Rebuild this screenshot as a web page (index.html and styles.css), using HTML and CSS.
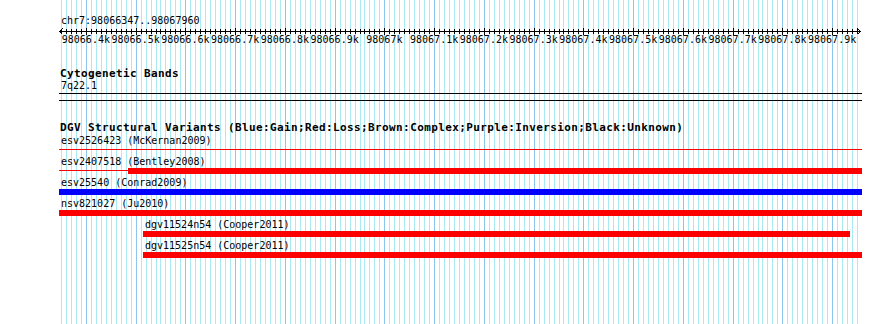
FILE: index.html
```html
<!DOCTYPE html>
<html lang="en">
<head>
    <meta charset="UTF-8">
    <title>chr7:98066347..98067960</title>
    <link rel="stylesheet" href="styles.css">
</head>
<body>
    <div class="browser">
        <!-- guide lines every 10bp, filled in by script.js -->
        <svg class="guides" id="guides" width="804" height="324"></svg>

        <div class="tracks">
            <div class="position">chr7:98066347..98067960</div>
            <svg class="ruler" id="ruler" width="804" height="9"></svg>
            <div class="scale-labels">
                <span>98066.4k</span><span>98066.5k</span><span>98066.6k</span><span>98066.7k</span>
                <span>98066.8k</span><span>98066.9k</span><span>98067k</span><span>98067.1k</span>
                <span>98067.2k</span><span>98067.3k</span><span>98067.4k</span><span>98067.5k</span>
                <span>98067.6k</span><span>98067.7k</span><span>98067.8k</span><span>98067.9k</span>
            </div>

            <div class="track cyto">
                <div class="track-title">Cytogenetic Bands</div>
                <div class="band-name">7q22.1</div>
                <div class="band"></div>
            </div>

            <div class="track dgv">
                <div class="track-title">DGV Structural Variants (Blue:Gain;Red:Loss;Brown:Complex;Purple:Inversion;Black:Unknown)</div>

                <div class="feature">
                    <div class="feature-label">esv2526423 (McKernan2009)</div>
                    <div class="feature-bar"><div class="thin loss"></div></div>
                </div>
                <div class="feature">
                    <div class="feature-label">esv2407518 (Bentley2008)</div>
                    <div class="feature-bar">
                        <div class="thin loss" style="width: 69px"></div>
                        <div class="thick loss"></div>
                    </div>
                </div>
                <div class="feature">
                    <div class="feature-label">esv25540 (Conrad2009)</div>
                    <div class="feature-bar"><div class="thick gain"></div></div>
                </div>
                <div class="feature">
                    <div class="feature-label">nsv821027 (Ju2010)</div>
                    <div class="feature-bar"><div class="thick loss"></div></div>
                </div>
                <div class="feature" style="--start: 84px">
                    <div class="feature-label">dgv11524n54 (Cooper2011)</div>
                    <div class="feature-bar"><div class="thick loss" style="flex: 0 0 707px"></div></div>
                </div>
                <div class="feature" style="--start: 84px">
                    <div class="feature-label">dgv11525n54 (Cooper2011)</div>
                    <div class="feature-bar"><div class="thick loss"></div></div>
                </div>
            </div>
        </div>
    </div>
    <script src="script.js"></script>
</body>
</html>
```

FILE: styles.css
```css
body {
    margin: 0;
    background-color: #fff;
    color: #000;
    font-family: "DejaVu Sans Mono", monospace;
    font-size: 10px;
    line-height: 10px;
}

.browser {
    position: relative;
    margin-left: 59px;
    width: 803px;
    height: 324px;
    overflow: hidden;
}

.guides {
    position: absolute;
    top: 0;
    left: 0;
}

.tracks {
    position: relative;
    padding-top: 16px;
}

.position {
    padding-left: 2px;
}

.ruler {
    display: block;
}

.scale-labels {
    display: flex;
    padding-left: 2px;
    white-space: nowrap;
}

.scale-labels span {
    flex: 0 0 49.75px;
    text-align: center;
}

.track-title {
    font-size: 11px;
    font-weight: bold;
    letter-spacing: 0.38px;
    padding-left: 1px;
    white-space: nowrap;
}

.cyto .track-title {
    margin-top: 24px;
}

.band-name {
    margin-top: 2px;
    padding-left: 2px;
}

.band {
    margin-top: 2px;
    height: 6px;
    border-top: 1px solid #000;
    border-bottom: 1px solid #000;
}

.dgv .track-title {
    margin-top: 22px;
    margin-bottom: 3px;
}

.feature {
    --start: 0px;
    margin-bottom: 4px;
}

.feature-label {
    margin-left: var(--start);
    padding-left: 2px;
    white-space: nowrap;
}

.feature-bar {
    display: flex;
    margin-top: 1px;
    margin-left: var(--start);
    height: 6px;
}

.thin {
    flex: 1;
    height: 1px;
    margin-top: 2px;
}

.thin[style] {
    flex: none;
}

.thick {
    flex: 1;
    height: 6px;
}

.loss {
    background-color: #f00;
}

.gain {
    background-color: #00f;
}
```

FILE: script.js
```js
// window shown: chr7:98066347..98067960 over 803px
const START = 98066346;
const END = 98067960;
const WIDTH = 803;
const SVG_NS = "http://www.w3.org/2000/svg";

function xOf(bp) {
    return Math.round((bp - START) * WIDTH / (END - START)) + 0.5;
}

function line(svg, x1, y1, x2, y2, color) {
    const l = document.createElementNS(SVG_NS, "line");
    l.setAttribute("x1", x1);
    l.setAttribute("y1", y1);
    l.setAttribute("x2", x2);
    l.setAttribute("y2", y2);
    l.setAttribute("stroke", color);
    l.setAttribute("stroke-width", 1);
    l.setAttribute("shape-rendering", "crispEdges");
    svg.appendChild(l);
}

const guides = document.getElementById("guides");
const ruler = document.getElementById("ruler");

for (let bp = 98066350; bp <= END; bp += 10) {
    const x = xOf(bp);
    const major = bp % 100 === 0;
    line(guides, x, 0, x, 324, major ? "#8cc6ee" : "#aaeaf2");
    // ticks on the ruler
    if (bp < END) {
        if (major) {
            line(ruler, x, 2, x, 9, "#000");
        } else {
            line(ruler, x, 3, x, 8, "#000");
        }
    }
}

// base line with arrows at both ends
line(ruler, 0, 5.5, 802, 5.5, "#000");
line(ruler, 0.5, 5.5, 3.5, 2.5, "#000");
line(ruler, 0.5, 5.5, 3.5, 8.5, "#000");
line(ruler, 801.5, 5.5, 798.5, 2.5, "#000");
line(ruler, 801.5, 5.5, 798.5, 8.5, "#000");
```
